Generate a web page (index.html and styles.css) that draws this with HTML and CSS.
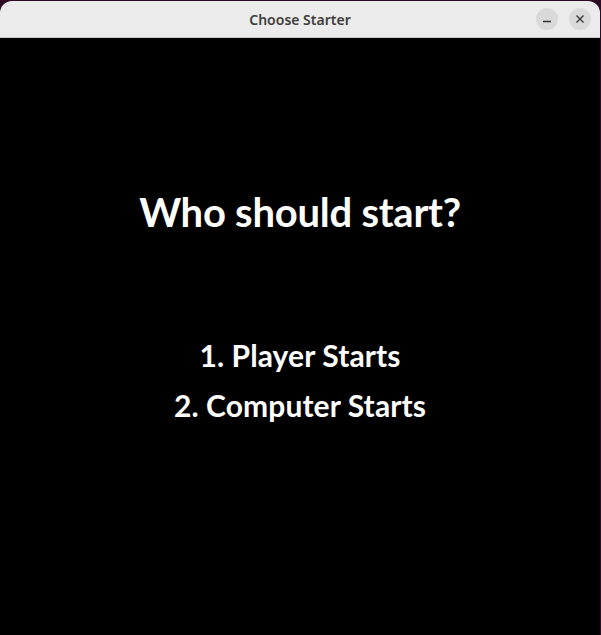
FILE: index.html
```html
<!DOCTYPE html>
<html>
<head>
<meta charset="utf-8">
<link rel="stylesheet" href="styles.css">
</head>
<body>
<div class="window">
  <div class="titlebar">
    <div class="title">Choose Starter</div>
    <div class="controls">
      <div class="btn"><svg width="10" height="10" viewBox="0 0 10 10"><path d="M1 7.5h8" stroke="#333" stroke-width="1.3"/></svg></div>
      <div class="btn"><svg width="10" height="10" viewBox="0 0 10 10"><path d="M1.5 1.5l7 7M8.5 1.5l-7 7" stroke="#333" stroke-width="1.3"/></svg></div>
    </div>
  </div>
  <div class="content">
    <h1 class="heading">Who should start?</h1>
    <div class="menu">
      <div class="item">1. Player Starts</div>
      <div class="item">2. Computer Starts</div>
    </div>
  </div>
</div>
</body>
</html>
```

FILE: styles.css
```css
html, body {
  margin: 0;
  padding: 0;
  height: 100%;
  background: #2e0a24;
  overflow: hidden;
}
.window {
  margin: 1px 1px 0 0;
  height: 634px;
  display: flex;
  flex-direction: column;
  border-radius: 12px 12px 0 0;
  overflow: hidden;
  background: #000;
}
.titlebar {
  height: 36px;
  flex: none;
  background: #ebebeb;
  border-bottom: 1px solid #c9c9c9;
  display: flex;
  align-items: center;
  justify-content: center;
  position: relative;
}
.title {
  font-family: "Noto Sans", "DejaVu Sans", sans-serif;
  font-weight: 600;
  font-size: 14px;
  color: #3d3d3d;
}
.controls {
  position: absolute;
  right: 9px;
  top: 7px;
  display: flex;
  gap: 11px;
}
.btn {
  width: 22px;
  height: 22px;
  border-radius: 50%;
  background: #d9d9d9;
  display: flex;
  align-items: center;
  justify-content: center;
}
.content {
  flex: 1;
  display: flex;
  flex-direction: column;
  align-items: center;
  padding-top: 150px;
  font-family: Lato, "Open Sans", sans-serif;
  color: #fff;
}
.heading {
  margin: 0;
  font-size: 40px;
  line-height: 48px;
  font-weight: 700;
  letter-spacing: -0.25px;
}
.menu {
  margin-top: 94px;
  display: flex;
  flex-direction: column;
  align-items: center;
}
.item {
  font-size: 30px;
  line-height: 50px;
  font-weight: 700;
  letter-spacing: 0.1px;
}
```
